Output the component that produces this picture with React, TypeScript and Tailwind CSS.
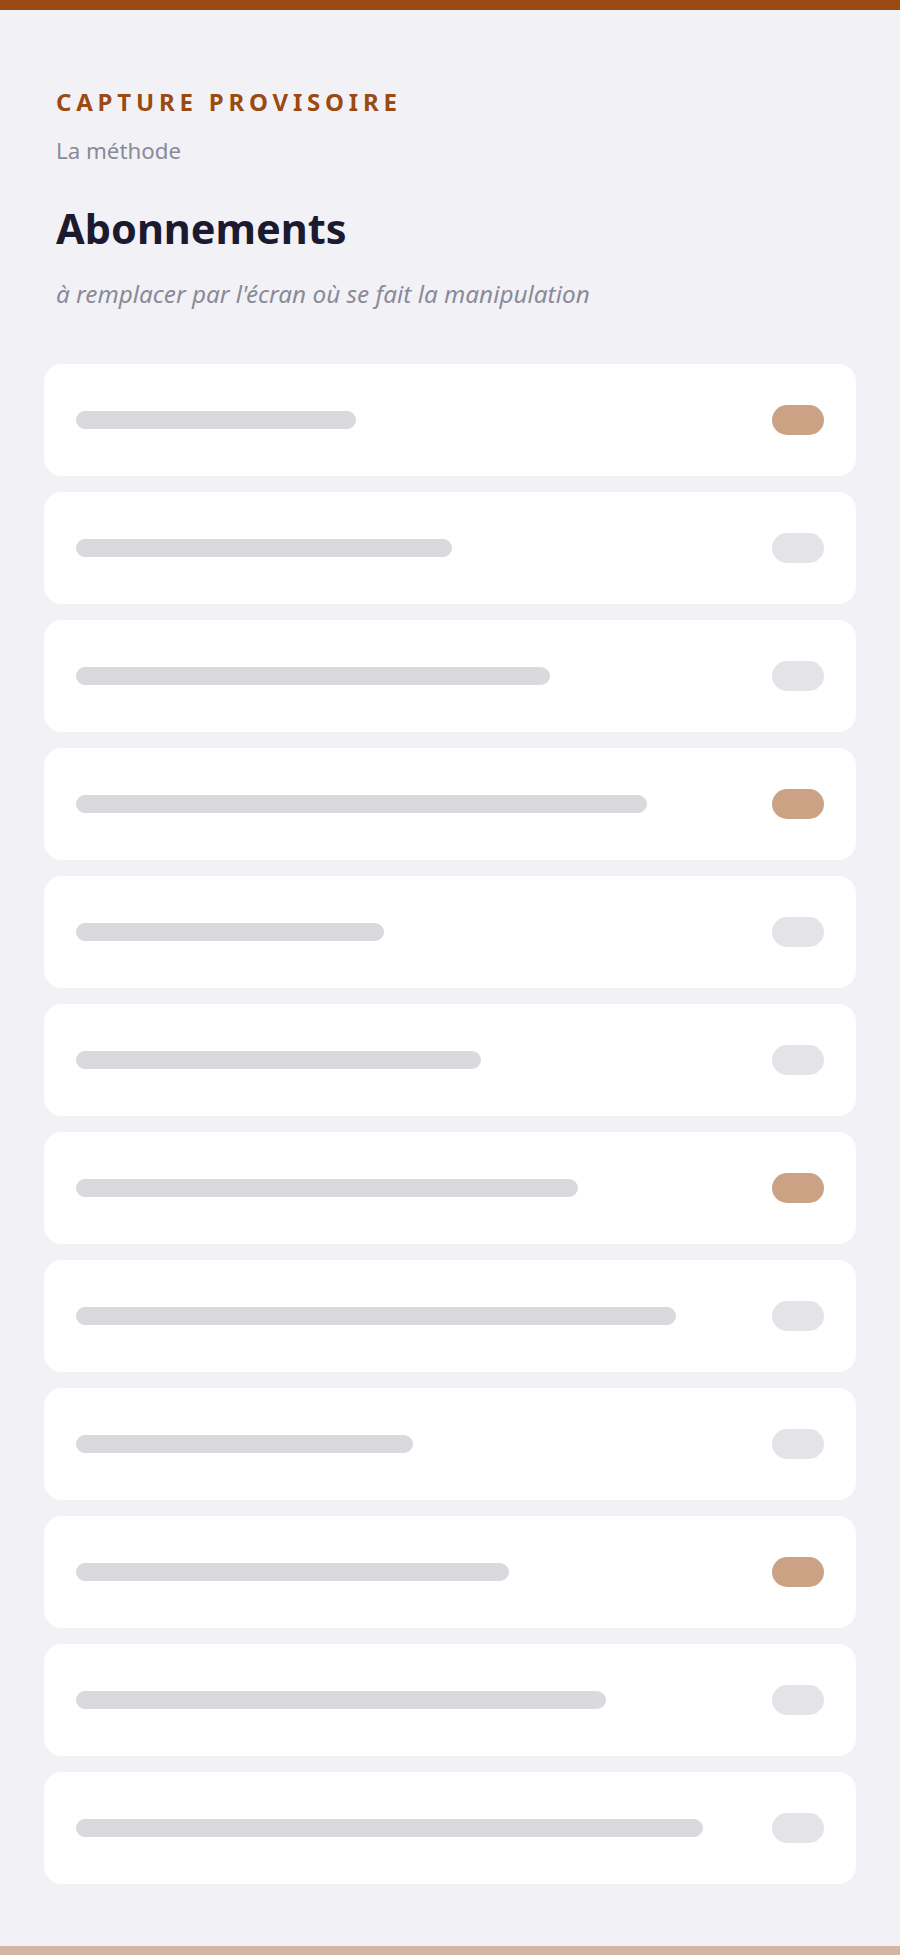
const rows = [
  { w: "w-[280px]", on: true },
  { w: "w-[376px]", on: false },
  { w: "w-[474px]", on: false },
  { w: "w-[571px]", on: true },
  { w: "w-[308px]", on: false },
  { w: "w-[405px]", on: false },
  { w: "w-[502px]", on: true },
  { w: "w-[600px]", on: false },
  { w: "w-[337px]", on: false },
  { w: "w-[433px]", on: true },
  { w: "w-[530px]", on: false },
  { w: "w-[627px]", on: false },
]

function Row({ w, on }: { w: string; on: boolean }) {
  return (
    <div className="flex h-[112px] items-center justify-between rounded-[18px] bg-white px-8">
      <div className={`h-[18px] rounded-full bg-[#d9d9de] ${w}`} />
      <div className={`h-[30px] w-[52px] rounded-full ${on ? "bg-[#cca284]" : "bg-[#e3e3e8]"}`} />
    </div>
  )
}

export default function App() {
  return (
    <div className="min-h-screen bg-[#f2f2f6] font-['Noto_Sans',sans-serif]">
      <div className="h-[10px] bg-[#9a4a12]" />
      <header className="px-[56px] pt-[77px]">
        <div className="text-[24px] leading-[30px] font-bold tracking-[0.2em] text-[#9a4a12]">CAPTURE PROVISOIRE</div>
        <div className="mt-[19px] text-[22.3px] leading-[30px] text-[#8a8a99]">La méthode</div>
        <h1 className="mt-[37px] text-[41.5px] leading-[50px] font-bold text-[#1c1a2e]">Abonnements</h1>
        <p className="mt-[25px] text-[24.3px] leading-[32px] italic text-[#8a8a99]">
          à remplacer par l'écran où se fait la manipulation
        </p>
      </header>
      <main className="flex flex-col gap-4 px-[44px] pt-[54px] pb-[62px]">
        {rows.map((r, i) => (
          <Row key={i} w={r.w} on={r.on} />
        ))}
      </main>
      <div className="h-[9px] bg-[#d4b6a5]" />
    </div>
  )
}
